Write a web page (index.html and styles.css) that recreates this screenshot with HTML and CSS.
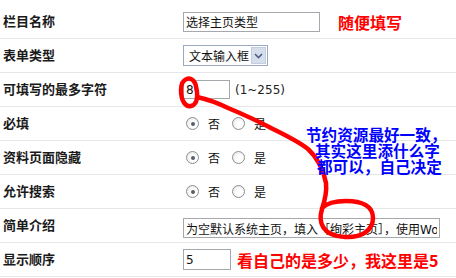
FILE: index.html
```html
<!DOCTYPE html>
<html lang="zh-CN">
<head>
    <meta charset="UTF-8">
    <title>栏目设置</title>
    <link rel="stylesheet" href="styles.css">
</head>
<body>
    <div class="form">
        <div class="row">
            <div class="label">栏目名称</div>
            <div class="field">
                <input class="text w-name" type="text" value="选择主页类型">
                <span class="note-red note-name">随便填写</span>
            </div>
        </div>
        <div class="row">
            <div class="label">表单类型</div>
            <div class="field">
                <div class="select">
                    <span class="select-text">文本输入框</span>
                    <span class="select-btn">
                        <svg width="9" height="6" viewBox="0 0 9 6"><path d="M1 1 L4.5 4.5 L8 1" fill="none" stroke="#4d5f80" stroke-width="1.6"/></svg>
                    </span>
                </div>
            </div>
        </div>
        <div class="row">
            <div class="label">可填写的最多字符</div>
            <div class="field">
                <input class="text w-max" type="text" value="8">
                <span class="hint">(1~255)</span>
            </div>
        </div>
        <div class="row">
            <div class="label">必填</div>
            <div class="field">
                <span class="radio checked"></span><span class="opt">否</span>
                <span class="radio"></span><span class="opt">是</span>
            </div>
        </div>
        <div class="row">
            <div class="label">资料页面隐藏</div>
            <div class="field">
                <span class="radio checked"></span><span class="opt">否</span>
                <span class="radio"></span><span class="opt">是</span>
            </div>
        </div>
        <div class="row">
            <div class="label">允许搜索</div>
            <div class="field">
                <span class="radio checked"></span><span class="opt">否</span>
                <span class="radio"></span><span class="opt">是</span>
            </div>
        </div>
        <div class="row">
            <div class="label">简单介绍</div>
            <div class="field">
                <input class="text w-desc" type="text" value="为空默认系统主页，填入［绚彩主页］，使用WoW主页">
            </div>
        </div>
        <div class="row">
            <div class="label">显示顺序</div>
            <div class="field">
                <input class="text w-order" type="text" value="5">
                <span class="note-red note-order">看自己的是多少，我这里是5</span>
            </div>
        </div>
    </div>

    <!-- 手画的批注 -->
    <div class="marks">
        <svg class="scribble" width="456" height="278" viewBox="0 0 456 278">
            <path d="M195 83 C191 75, 181 78, 181 90 C181 102, 186 107, 191 106 C196 105, 198 99, 197 92 C196 87, 196 85, 195 83"
                  fill="none" stroke="#ff0000" stroke-width="4.5" stroke-linecap="round" stroke-linejoin="round"/>
            <path d="M197 97 C206 99, 218 103, 228 108 C240 113, 258 121, 271 128 C283 134, 298 141, 308 149 C318 158, 323 168, 326 183 C327 192, 325 200, 322 209 C318 222, 322 236, 345 237 C362 238, 373 230, 373 218 C373 206, 362 201, 346 201 C336 201, 327 203, 322 208"
                  fill="none" stroke="#ff0000" stroke-width="4.5" stroke-linecap="round" stroke-linejoin="round"/>
        </svg>
        <div class="note-blue">
            <div class="l1">节约资源最好一致，</div>
            <div class="l2">其实这里添什么字</div>
            <div class="l3">都可以，自己决定</div>
        </div>
    </div>
</body>
</html>
```

FILE: styles.css
```css
body {
    margin: 0;
    background-color: #fff;
    font-family: "Noto Sans CJK SC", sans-serif;
    font-size: 12px;
    color: #222;
    position: relative;
    width: 456px;
    height: 278px;
    overflow: hidden;
}

.form {
    padding-top: 5px;
}

.row {
    display: flex;
    height: 33px;
    border-bottom: 1px solid #e6e6e6;
}

.label {
    width: 180px;
    padding: 9px 0 0 3px;
    font-size: 13px;
    line-height: 14px;
    font-weight: bold;
    color: #1a1a1a;
}

.field {
    flex: 1;
    display: flex;
    align-items: center;
}

.text {
    box-sizing: border-box;
    height: 20px;
    margin: 0;
    padding: 0 2px;
    border: 1px solid #a5a9ad;
    font-family: "DejaVu Sans", "Noto Sans CJK SC", sans-serif;
    font-size: 12px;
    color: #111;
    background: #fff;
}

.w-name {
    width: 137px;
}

.w-max {
    width: 47px;
    height: 19px;
}

.w-desc {
    width: 257px;
    margin-top: 5px;
}

.w-order {
    width: 48px;
    height: 21px;
}

.hint {
    margin-left: 5px;
    font-family: "DejaVu Sans", sans-serif;
    font-size: 12px;
    color: #222;
}

.note-red {
    color: #ff0000;
    font-weight: bold;
    font-size: 16px;
    line-height: 18px;
}

.note-name {
    margin-left: 18px;
}

.note-order {
    margin-left: 6px;
}

.select {
    box-sizing: border-box;
    width: 85px;
    height: 21px;
    border: 1px solid #9aa8c2;
    display: flex;
    align-items: center;
    justify-content: space-between;
    padding: 1px;
}

.select-text {
    padding-left: 4px;
    font-size: 12px;
    color: #111;
}

.select-btn {
    box-sizing: border-box;
    width: 15px;
    height: 17px;
    background: #d6deec;
    border: 1px solid #c2cde0;
    display: flex;
    align-items: center;
    justify-content: center;
}

.radio {
    box-sizing: border-box;
    width: 13px;
    height: 13px;
    border-radius: 50%;
    border: 1px solid #8c8e90;
    background: radial-gradient(circle at 60% 60%, #ffffff 30%, #e0e0e0 100%);
    display: inline-flex;
    align-items: center;
    justify-content: center;
    margin-left: 3px;
}

.radio + .opt {
    margin-left: 9px;
}

.opt + .radio {
    margin-left: 12px;
}

.radio.checked::after {
    content: '';
    width: 4px;
    height: 4px;
    border-radius: 50%;
    background: #56606a;
}

.opt {
    font-size: 12px;
    color: #111;
}

.marks {
    position: absolute;
    top: 0;
    left: 0;
    width: 456px;
    height: 278px;
    pointer-events: none;
}

.scribble {
    position: absolute;
    top: 0;
    left: 0;
}

.note-blue {
    position: absolute;
    top: 126px;
    left: 306px;
    color: #0000ff;
    font-weight: bold;
    font-size: 15.6px;
    line-height: 16px;
    white-space: nowrap;
}

.note-blue .l2 {
    padding-left: 9px;
}

.note-blue .l3 {
    padding-left: 11px;
}
```
